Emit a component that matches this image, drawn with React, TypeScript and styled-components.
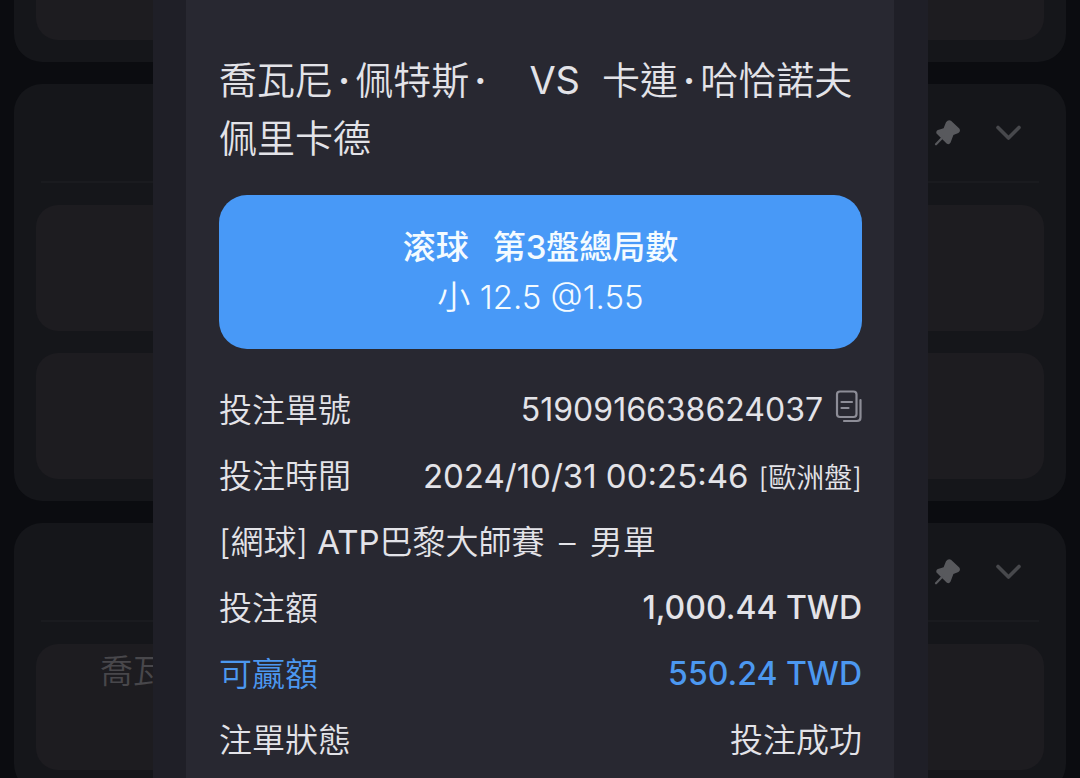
import React from 'react';
import styled, { createGlobalStyle } from 'styled-components';

const GlobalStyle = createGlobalStyle`
  *, *::before, *::after { box-sizing: border-box; }
  body {
    margin: 0;
    background: #0b0c10;
    color: #e3e3e8;
    font-family: Inter, "Noto Sans CJK TC", sans-serif;
    font-size: 33px;
    font-weight: 350;
  }
  h1, h2, p, dl, dt, dd { margin: 0; font-weight: inherit; font-size: inherit; }
  button { border: 0; padding: 0; background: none; color: inherit; font: inherit; display: flex; cursor: pointer; }
`;

const Page = styled.div`
  position: relative;
  height: 100vh;
  overflow: hidden;
`;

const BetList = styled.main`
  display: flex;
  flex-direction: column;
  gap: 22px;
  padding: 0 14px;
`;

const BetCard = styled.section<{ $cut?: boolean }>`
  flex: none;
  padding: 0 22px 22px;
  border-radius: ${p => (p.$cut ? '0 0 28px 28px' : '28px')};
  background: #15161a;
`;

const CardHeader = styled.header`
  display: flex;
  align-items: center;
  justify-content: flex-end;
  gap: 34px;
  height: 99px;
  margin: 0 5px 22px;
  padding-right: 17px;
  border-bottom: 2px solid #1a1b1f;
  color: #58595d;
`;

const BetItem = styled.div<{ $cut?: boolean }>`
  height: ${p => (p.$cut ? '40px' : '126px')};
  padding: 0 64px;
  border-radius: ${p => (p.$cut ? '0 0 22px 22px' : '22px')};
  background: #1d1c20;
  color: #48474b;
  line-height: 54px;

  & + & { margin-top: 22px; }
`;

const Overlay = styled.div`
  position: absolute;
  inset: 0;
  padding: 0 152px 0 153px;
`;

const Dialog = styled.div`
  height: 100%;
  padding: 0 34px 0 33px;
  background: #1f1f27;
`;

const Slip = styled.div`
  height: 100%;
  padding: 51px 32px 0 33px;
  background: #282831;
`;

const Latin = styled.span`
  font-weight: 400;
`;

const Match = styled.h1`
  display: flex;
  gap: 22px;
  margin-bottom: 28px;
  font-size: 38px;
  line-height: 58px;
`;

const Home = styled.span`
  flex: 1;
`;

const Away = styled.span`
  flex: 0 0 260px;
  white-space: nowrap;
`;

const Dot = styled.span`
  margin: 0 5px;
  font-weight: 600;
`;

const Pick = styled.section`
  padding: 27px;
  border-radius: 28px;
  background: #4899f7;
  color: #f4fbff;
  line-height: 50px;
  text-align: center;
`;

const Market = styled.h2`
  display: flex;
  justify-content: center;
  gap: 24px;
  font-weight: 500;
`;

const Details = styled.dl`
  margin-top: 28px;
  line-height: 66px;
`;

const Row = styled.div<{ $accent?: boolean }>`
  display: flex;
  justify-content: space-between;
  height: 66px;
  white-space: nowrap;
  color: ${p => (p.$accent ? '#4c98f0' : 'inherit')};
`;

const Value = styled.dd`
  display: flex;
  align-items: baseline;
  gap: 10px;
`;

const CopyableValue = styled(Value)`
  align-items: center;
  gap: 12px;
  font-size: 32px;
`;

const Amount = styled(Value)`
  font-size: 32px;
  font-weight: 500;
`;

const Note = styled.span`
  font-size: 28px;
`;

const Dash = styled.span`
  margin: 0 5px;
`;

const PinIcon = () => (
  <svg width="27" height="27" viewBox="0 0 27 27" aria-hidden="true">
    <path
      d="M12 3.2Q14.2.3 17 1.7L25.3 9.6Q27 12.5 24.4 14L19.4 16 16.6 23.6Q15 26.2 12.6 24.5L2.5 14.6Q1.6 12 4 11L9.6 9.2Z"
      fill="currentColor"
    />
    <path d="M9.5 17.5 2 25.3" stroke="currentColor" strokeWidth="2.2" strokeLinecap="round" />
  </svg>
);

const ChevronIcon = () => (
  <svg width="27" height="18" viewBox="0 0 27 18" fill="none" aria-hidden="true">
    <path d="M3 3.5 13.5 14 24 3.5" stroke="#47484c" strokeWidth="3.6" strokeLinecap="round" strokeLinejoin="round" />
  </svg>
);

const CopyIcon = () => (
  <svg width="27" height="40" viewBox="0 0 27 40" fill="none" stroke="#8d8d97" strokeWidth="2.2" strokeLinecap="round" aria-hidden="true">
    <rect x="2" y="1.5" width="19.5" height="25.5" rx="3" />
    <path d="M25.5 10V27.5Q25.5 31 22 31H9M6.5 12H17M6.5 18H13.5" />
  </svg>
);

const Header = () => (
  <CardHeader>
    <button type="button" aria-label="置頂"><PinIcon /></button>
    <button type="button" aria-label="展開"><ChevronIcon /></button>
  </CardHeader>
);

export default function App() {
  return (
    <Page lang="zh-Hant">
      <GlobalStyle />
      <BetList>
        <BetCard $cut>
          <BetItem $cut />
        </BetCard>
        <BetCard>
          <Header />
          <BetItem />
          <BetItem />
        </BetCard>
        <BetCard>
          <Header />
          <BetItem>喬瓦</BetItem>
        </BetCard>
      </BetList>
      <Overlay>
        <Dialog role="dialog" aria-label="注單">
          <Slip>
            <Match>
              <Home>喬瓦尼<Dot>·</Dot>佩特斯<Dot>·</Dot>佩里卡德</Home>
              <Latin>VS</Latin>
              <Away>卡連<Dot>·</Dot>哈恰諾夫</Away>
            </Match>
            <Pick>
              <Market><span>滚球</span><span>第3盤總局數</span></Market>
              <p>小 12.5 @1.55</p>
            </Pick>
            <Details>
              <Row>
                <dt>投注單號</dt>
                <CopyableValue>
                  <Latin>5190916638624037</Latin>
                  <button type="button" aria-label="複製"><CopyIcon /></button>
                </CopyableValue>
              </Row>
              <Row>
                <dt>投注時間</dt>
                <Value><Latin>2024/10/31 00:25:46</Latin> <Note>[歐洲盤]</Note></Value>
              </Row>
              <Row>
                <dt>[網球] <Latin>ATP</Latin>巴黎大師賽 <Dash>–</Dash> 男單</dt>
              </Row>
              <Row>
                <dt>投注額</dt>
                <Amount>1,000.44 TWD</Amount>
              </Row>
              <Row $accent>
                <dt>可贏額</dt>
                <Amount>550.24 TWD</Amount>
              </Row>
              <Row>
                <dt>注單狀態</dt>
                <Value>投注成功</Value>
              </Row>
            </Details>
          </Slip>
        </Dialog>
      </Overlay>
    </Page>
  );
}
